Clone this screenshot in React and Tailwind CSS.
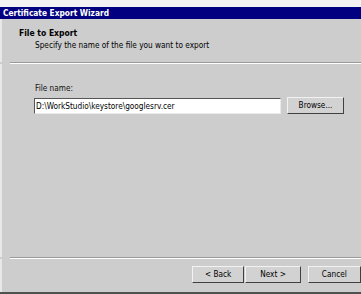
import React from 'react';

const font = { fontFamily: '"DejaVu Sans Condensed", "Liberation Sans", Arial, sans-serif' };

function Button({ children, className = '' }) {
  return (
    <div
      className={`h-[17px] flex items-center justify-center text-[8.2px] text-black bg-[#d2d2d2] border border-t-[#f2f2f2] border-l-[#f2f2f2] border-r-[#404040] border-b-[#404040] ${className}`}
    >
      {children}
    </div>
  );
}

export default function App() {
  return (
    <div className="w-[361px] h-[294px] bg-[#cdcdcd] flex flex-col overflow-hidden" style={font}>
      <div className="h-[7px] bg-[#f3f3f3]" />
      <div className="h-[12px] bg-[#000080] text-white font-bold text-[8.3px] leading-[12px] pl-[3px]">
        Certificate Export Wizard
      </div>

      <div className="h-[43px] pl-[17px] pt-[9px] border-l-[2px] border-[#e8e8e8]">
        <div className="text-[8.5px] font-bold leading-[11px] text-black">File to Export</div>
        <div className="text-[8.2px] leading-[11px] text-black pl-[16px] mt-[1px]">
          Specify the name of the file you want to export
        </div>
      </div>
      <div className="h-[2px] border-t border-[#9a9a9a] bg-white ml-[10px]" />

      <div className="flex-1 pl-[32px] pt-[19px] border-l-[2px] border-[#e8e8e8]">
        <div className="text-[8.2px] leading-[11px] text-[#111] pl-[1px]">File name:</div>
        <div className="flex items-center mt-[3px]">
          <div className="w-[247px] h-[16px] bg-white border border-t-[#555] border-l-[#555] border-r-[#eaeaea] border-b-[#eaeaea] text-[8.2px] leading-[14px] pl-[1px] text-black">
            D:\WorkStudio\keystore\googlesrv.cer
          </div>
          <Button className="w-[57px] ml-[6px]">Browse...</Button>
        </div>
      </div>

      <div className="h-[2px] border-t border-[#9a9a9a] bg-white ml-[10px]" />
      <div className="h-[33px] flex items-start pt-[7px] pl-[190px] border-l-[2px] border-[#e8e8e8]">
        <Button className="w-[54px]">&lt; Back</Button>
        <Button className="w-[57px] ml-[1px]">Next &gt;</Button>
        <Button className="w-[55px] ml-[7px]">Cancel</Button>
      </div>
      <div className="h-[2px] bg-[#505050]" />
    </div>
  );
}
